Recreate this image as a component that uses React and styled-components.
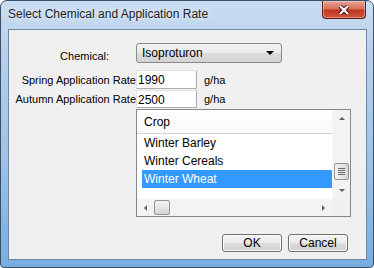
import React from 'react';
import styled, { createGlobalStyle } from 'styled-components';

const Global = createGlobalStyle`
    html, body {
        margin: 0;
        padding: 0;
        background: #ffffff;
    }
    * {
        box-sizing: border-box;
    }
`;

const Window = styled.div`
    width: 374px;
    height: 268px;
    display: flex;
    flex-direction: column;
    border: 1px solid #3a4f66;
    border-radius: 7px 7px 4px 4px;
    background: linear-gradient(180deg, #c9ddf1 0%, #b7d0ea 20%, #9ec2e6 60%, #77aee0 100%);
    font-family: 'Liberation Sans', Arial, sans-serif;
    overflow: hidden;
`;

const TitleBar = styled.div`
    height: 28px;
    display: flex;
    align-items: flex-start;
    justify-content: space-between;
    padding-left: 7px;
`;

const Title = styled.span`
    margin-top: 6px;
    font-size: 12px;
    color: #1e1e1e;
    text-shadow: 0 0 6px #ffffff;
`;

const CloseButton = styled.div`
    width: 44px;
    height: 18px;
    margin-right: 7px;
    border: 1px solid #5b2119;
    border-top: none;
    border-radius: 0 0 4px 4px;
    background: linear-gradient(180deg, #e8a393 0%, #d8705c 45%, #c0361f 55%, #d2553c 100%);
    box-shadow: inset 0 0 0 1px rgba(255, 255, 255, 0.35);
    display: flex;
    align-items: center;
    justify-content: center;
`;

const Client = styled.div`
    flex: 1;
    margin: 0 6px 7px 7px;
    border: 1px solid #6d88a6;
    background: #f0f0f0;
    display: flex;
    flex-direction: column;
    font-size: 11px;
    color: #000;
`;

const Form = styled.div`
    display: grid;
    grid-template-columns: 127px 61px 1fr;
    margin-top: 13px;
    margin-right: 14px;
    row-gap: 1px;
`;

const Label = styled.label`
    grid-column: 1;
    justify-self: end;
    align-self: center;
    padding-right: ${(p) => p.$pad || 0}px;
    white-space: nowrap;
`;

const Combo = styled.div`
    grid-column: 2 / span 2;
    width: 146px;
    height: 20px;
    margin-bottom: 6px;
    border: 1px solid #8a8a8a;
    border-radius: 3px;
    background: linear-gradient(180deg, #f3f3f3 0%, #ebebeb 50%, #dddddd 51%, #d3d3d3 100%);
    display: flex;
    align-items: center;
    justify-content: space-between;
    padding: 0 7px 0 5px;
    font-size: 12px;
`;

const Arrow = styled.span`
    width: 0;
    height: 0;
    border-left: 4px solid transparent;
    border-right: 4px solid transparent;
    border-top: 4px solid #000;
`;

const Input = styled.div`
    grid-column: 2;
    height: ${(p) => p.$h}px;
    background: #ffffff;
    border: 1px solid #abadb3;
    border-top-color: #e2e3ea;
    border-left-color: #e2e3ea;
    padding: 2px 0 0 1px;
    font-size: 12px;
`;

const Unit = styled.span`
    grid-column: 3;
    align-self: center;
    padding-left: 7px;
`;

const List = styled.div`
    grid-column: 2 / span 2;
    width: 215px;
    height: 108px;
    border: 1px solid #828790;
    background: #ffffff;
    display: grid;
    grid-template-columns: 1fr 18px;
    grid-template-rows: 1fr 17px;
`;

const Viewport = styled.div`
    display: flex;
    flex-direction: column;
`;

const Header = styled.div`
    height: 24px;
    border-bottom: 1px solid #d5d5d5;
    background: linear-gradient(180deg, #ffffff 0%, #f7f8fa 100%);
    padding: 5px 0 0 7px;
    font-size: 12px;
`;

const Row = styled.div`
    height: 18px;
    margin-left: 5px;
    padding: 2px 0 0 2px;
    font-size: 12px;
    background: ${(p) => (p.$selected ? '#3399ff' : 'transparent')};
    color: ${(p) => (p.$selected ? '#ffffff' : '#000000')};
`;

const VScroll = styled.div`
    background: #f3f3f3;
    border-left: 1px solid #f8f8f8;
    display: flex;
    flex-direction: column;
    align-items: center;
`;

const HScroll = styled.div`
    background: #f3f3f3;
    display: flex;
    align-items: center;
`;

const Corner = styled.div`
    background: #f0f0f0;
`;

const ArrowBtn = styled.div`
    width: 17px;
    height: 17px;
    flex: none;
    display: flex;
    align-items: center;
    justify-content: center;
`;

const Tri = styled.span`
    width: 0;
    height: 0;
    ${(p) =>
        p.$dir === 'up'
            ? 'border-left: 3px solid transparent; border-right: 3px solid transparent; border-bottom: 3px solid #606060;'
            : p.$dir === 'down'
            ? 'border-left: 3px solid transparent; border-right: 3px solid transparent; border-top: 3px solid #606060;'
            : p.$dir === 'left'
            ? 'border-top: 3px solid transparent; border-bottom: 3px solid transparent; border-right: 3px solid #606060;'
            : 'border-top: 3px solid transparent; border-bottom: 3px solid transparent; border-left: 3px solid #606060;'}
`;

const Thumb = styled.div`
    width: ${(p) => (p.$vertical ? 15 : 16)}px;
    height: ${(p) => (p.$vertical ? 17 : 15)}px;
    flex: none;
    border: 1px solid #959595;
    border-radius: 2px;
    background: linear-gradient(${(p) => (p.$vertical ? '90deg' : '180deg')}, #f2f2f2 0%, #e6e6e6 50%, #d4d4d4 100%);
    display: flex;
    flex-direction: column;
    align-items: center;
    justify-content: center;
    gap: 1px;
`;

const Grip = styled.span`
    width: 7px;
    height: 1px;
    background: #6e6e6e;
`;

const Spacer = styled.div`
    flex: ${(p) => p.$grow || 1};
`;

const Buttons = styled.div`
    display: flex;
    justify-content: flex-end;
    gap: 6px;
    margin-top: 17px;
    margin-right: 18px;
`;

const Button = styled.button`
    width: 60px;
    height: 18px;
    padding: 0;
    border: 1px solid #707070;
    border-radius: 3px;
    background: linear-gradient(180deg, #f2f2f2 0%, #ebebeb 50%, #dddddd 51%, #cfcfcf 100%);
    box-shadow: inset 0 0 0 1px #fbfbfb;
    font-family: 'Liberation Sans', Arial, sans-serif;
    font-size: 12px;
    color: #000;
`;

const crops = ['Winter Barley', 'Winter Cereals', 'Winter Wheat'];

export default function App() {
    return (
        <>
            <Global />
            <Window>
                <TitleBar>
                    <Title>Select Chemical and Application Rate</Title>
                    <CloseButton>
                        <svg width='12' height='10' viewBox='0 0 12 10'>
                            <path d='M2 1 L10 9 M10 1 L2 9' stroke='#3a120c' strokeWidth='4' />
                            <path d='M2 1 L10 9 M10 1 L2 9' stroke='#ffffff' strokeWidth='2.2' />
                        </svg>
                    </CloseButton>
                </TitleBar>
                <Client>
                    <Form>
                        <Label $pad={27}>Chemical:</Label>
                        <Combo>
                            Isoproturon
                            <Arrow />
                        </Combo>
                        <Label>Spring Application Rate</Label>
                        <Input $h={19}>1990</Input>
                        <Unit>g/ha</Unit>
                        <Label>Autumn Application Rate</Label>
                        <Input $h={18}>2500</Input>
                        <Unit>g/ha</Unit>
                        <List>
                            <Viewport>
                                <Header>Crop</Header>
                                {crops.map((c) => (
                                    <Row key={c} $selected={c === 'Winter Wheat'}>
                                        {c}
                                    </Row>
                                ))}
                            </Viewport>
                            <VScroll>
                                <ArrowBtn>
                                    <Tri $dir='up' />
                                </ArrowBtn>
                                <Spacer $grow={2} />
                                <Thumb $vertical>
                                    <Grip />
                                    <Grip />
                                    <Grip />
                                    <Grip />
                                </Thumb>
                                <Spacer $grow={0.1} />
                                <ArrowBtn>
                                    <Tri $dir='down' />
                                </ArrowBtn>
                            </VScroll>
                            <HScroll>
                                <ArrowBtn>
                                    <Tri $dir='left' />
                                </ArrowBtn>
                                <Thumb />
                                <Spacer />
                                <ArrowBtn>
                                    <Tri $dir='right' />
                                </ArrowBtn>
                            </HScroll>
                            <Corner />
                        </List>
                    </Form>
                    <Buttons>
                        <Button>OK</Button>
                        <Button>Cancel</Button>
                    </Buttons>
                </Client>
            </Window>
        </>
    );
}
